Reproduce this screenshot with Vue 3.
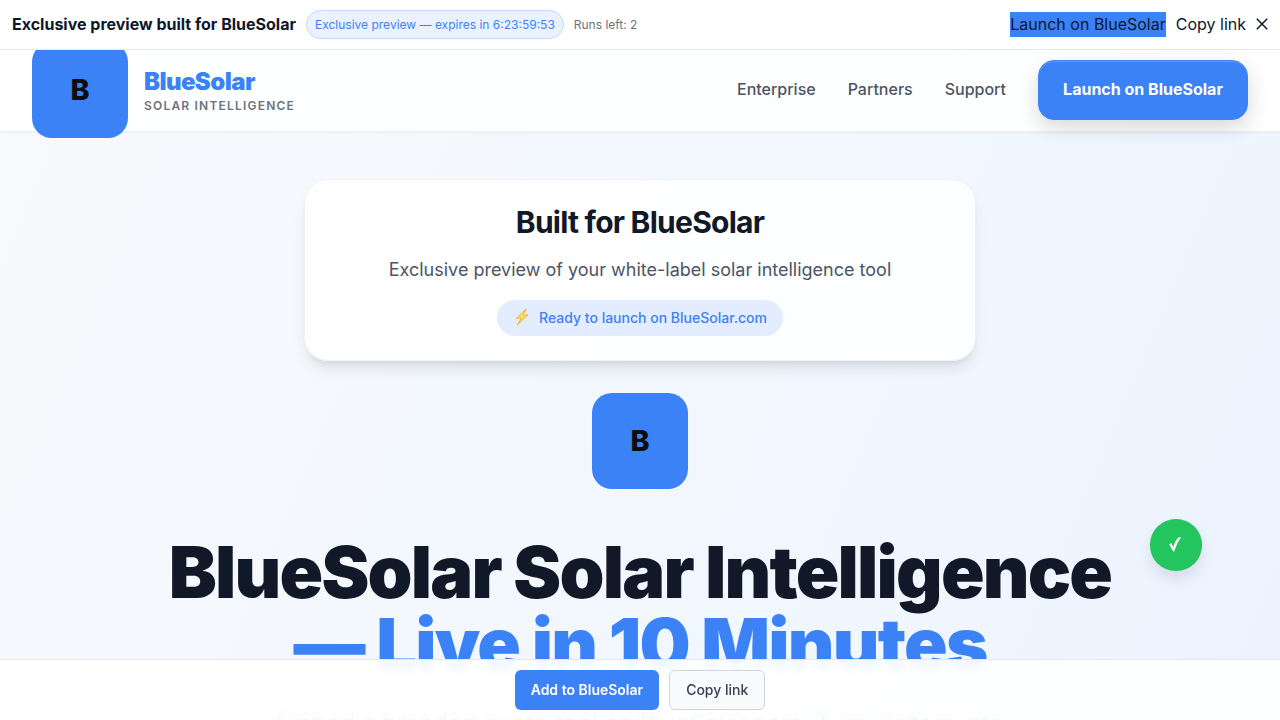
<script setup>
const navLinks = ['Enterprise', 'Partners', 'Support']
</script>

<template>
  <div class="page">
    <div class="preview-bar">
      <div class="preview-left">
        <span class="preview-title">Exclusive preview built for BlueSolar</span>
        <span class="preview-pill">Exclusive preview — expires in 6:23:59:53</span>
        <span class="preview-runs">Runs left: 2</span>
      </div>
      <div class="preview-right">
        <a class="preview-launch">Launch on BlueSolar</a>
        <a class="preview-copy">Copy link</a>
        <span class="close" aria-label="Close">
          <svg width="12" height="12" viewBox="0 0 12 12"><path d="M0.8 0.8 11.2 11.2M11.2 0.8 0.8 11.2" /></svg>
        </span>
      </div>
    </div>

    <header class="header">
      <div class="brand">
        <div class="logo">B</div>
        <div class="brand-text">
          <div class="brand-name">BlueSolar</div>
          <div class="brand-sub">Solar Intelligence</div>
        </div>
      </div>
      <nav class="nav">
        <a v-for="link in navLinks" :key="link" class="nav-link">{{ link }}</a>
        <button class="cta">Launch on BlueSolar</button>
      </nav>
    </header>

    <main class="main">
      <section class="card">
        <h2>Built for BlueSolar</h2>
        <p>Exclusive preview of your white-label solar intelligence tool</p>
        <div class="ready">
          <svg class="bolt" width="16" height="18" viewBox="0 0 16 18">
            <path d="M12.2 1 2.3 10.4 7.4 9.9 3.2 16.9 14 6.9 8.9 7.3Z" />
          </svg>
          <span>Ready to launch on BlueSolar.com</span>
        </div>
      </section>

      <div class="logo hero-logo">B</div>

      <h1 class="headline">BlueSolar Solar Intelligence <span>— Live in 10 Minutes</span></h1>
      <p class="lead">Embed a branded quote tool on BlueSolar.com. Turn visitors into</p>
    </main>

    <div class="check">
      <svg width="13" height="15" viewBox="0 0 13 15"><path d="M0.2 7.5 2.3 6.1 4.4 10.1C5.6 5.8 7.2 1.9 9.6 0.6L12.4 0.2C10 2.6 8.6 5.8 6.9 10L5.1 14.4 4.3 14.4Z" /></svg>
    </div>

    <div class="bottom-bar">
      <button class="add">Add to BlueSolar</button>
      <button class="copy">Copy link</button>
    </div>
  </div>
</template>

<style>
html,
body {
  overflow: hidden;
}
</style>

<style scoped>
* {
  box-sizing: border-box;
}
.page {
  height: 720px;
  overflow: hidden;
  position: relative;
  font-family: Inter, "Liberation Sans", sans-serif;
  font-size: 16px;
  line-height: 24px;
  color: #0f172a;
  background: linear-gradient(to bottom right, #f8fafc, #eff6ff 50%, #e0e7ff) 0 0 / 100% 3000px no-repeat;
}
.preview-bar {
  height: 50px;
  padding: 0 12px;
  display: flex;
  align-items: center;
  justify-content: space-between;
  background: #fff;
  border-bottom: 1px solid #e5e7eb;
  position: relative;
  z-index: 3;
}
.preview-left,
.preview-right {
  display: flex;
  align-items: center;
  gap: 10px;
}
.preview-title {
  font-weight: 700;
  padding-bottom: 1px;
}
.preview-pill {
  font-size: 12px;
  line-height: 19px;
  padding: 4px 8px;
  border: 1px solid #bfdbfe;
  border-radius: 999px;
  background: #eaf2ff;
  color: #3b82f6;
}
.preview-runs {
  font-size: 12px;
  color: #6b7280;
}
.preview-launch,
.preview-copy {
  padding-bottom: 1px;
}
.preview-launch {
  background: #3b82f6;
}
.close {
  display: flex;
  padding-bottom: 1px;
}
.close path {
  fill: none;
  stroke: #0f172a;
  stroke-width: 1.5;
}
.header {
  height: 82px;
  padding: 0 32px 1px;
  display: flex;
  align-items: center;
  justify-content: space-between;
  background: rgba(255, 255, 255, 0.9);
  border-bottom: 1px solid #eceff3;
  box-shadow: 0 1px 2px rgba(0, 0, 0, 0.04);
  position: relative;
  z-index: 2;
}
.brand {
  display: flex;
  align-items: center;
  gap: 16px;
}
.logo {
  width: 96px;
  height: 96px;
  border-radius: 20px;
  background: #3b82f6;
  color: #0d0d0d;
  font-size: 28.8px;
  font-weight: 800;
  display: flex;
  align-items: center;
  justify-content: center;
}
.brand-name {
  font-size: 24px;
  line-height: 32px;
  font-weight: 900;
  letter-spacing: -0.025em;
  color: #3b82f6;
}
.brand-sub {
  font-size: 12px;
  line-height: 16px;
  font-weight: 600;
  letter-spacing: 0.1em;
  text-transform: uppercase;
  color: #6b7280;
}
.nav {
  display: flex;
  align-items: center;
  gap: 32px;
}
.nav-link {
  font-weight: 500;
  color: #4b5563;
  padding-bottom: 2px;
}
button {
  font-family: inherit;
  margin: 0;
}
.cta {
  width: 210px;
  height: 60px;
  padding: 0 0 2px;
  border: 1px solid #3b82f6;
  border-radius: 16px;
  background: #3b82f6;
  color: #fff;
  font-size: 16px;
  font-weight: 700;
  box-shadow: 0 8px 20px rgba(0, 0, 0, 0.15), inset 0 1px 0 rgba(255, 255, 255, 0.2);
}
.main {
  padding-top: 47px;
  display: flex;
  flex-direction: column;
  align-items: center;
}
.card {
  width: 672px;
  height: 182px;
  padding: 24px;
  display: flex;
  flex-direction: column;
  align-items: center;
  background: rgba(255, 255, 255, 0.85);
  border: 1px solid rgba(229, 231, 235, 0.5);
  border-radius: 24px;
  box-shadow: 0 10px 15px -3px rgba(0, 0, 0, 0.1), 0 4px 6px -4px rgba(0, 0, 0, 0.1);
}
.card h2 {
  margin: 0 0 16px;
  font-size: 30px;
  line-height: 36px;
  font-weight: 700;
  letter-spacing: -0.025em;
  color: #111827;
}
.card p {
  margin: 0 0 16px;
  font-size: 18px;
  line-height: 28px;
  color: #4b5563;
}
.ready {
  height: 36px;
  padding: 0 16px;
  display: flex;
  align-items: center;
  border-radius: 18px;
  background: #e4edff;
  color: #3b82f6;
  font-size: 14px;
  line-height: 20px;
  font-weight: 500;
}
.bolt {
  margin: -2px 9px 0 1px;
}
.bolt path {
  fill: #ffe36b;
  stroke: #f5a623;
  stroke-width: 0.9;
  stroke-linejoin: round;
}
.hero-logo {
  margin-top: 32px;
}
.headline {
  width: 1000px;
  margin: 47px 0 0;
  text-align: center;
  font-size: 72px;
  line-height: 72px;
  font-weight: 900;
  letter-spacing: -0.025em;
  color: #111827;
}
.headline span {
  display: block;
  color: #3b82f6;
}
.lead {
  margin: 23px 0 0;
  text-align: center;
  white-space: nowrap;
  font-size: 24px;
  line-height: 39px;
  color: #4b5563;
}
.check {
  position: absolute;
  left: 1150.3px;
  top: 519.3px;
  width: 51.4px;
  height: 51.4px;
  border-radius: 50%;
  background: #22c55e;
  display: flex;
  align-items: center;
  justify-content: center;
  padding-bottom: 1px;
  box-shadow: 0 8px 15px rgba(0, 0, 0, 0.1);
}
.check path {
  fill: #fff;
}
.bottom-bar {
  position: absolute;
  left: 0;
  right: 0;
  bottom: 0;
  z-index: 3;
  height: 61px;
  display: flex;
  align-items: center;
  justify-content: center;
  gap: 10px;
  background: rgba(255, 255, 255, 0.94);
  border-top: 1px solid #e5e7eb;
  backdrop-filter: blur(4px);
}
.add,
.copy {
  height: 40px;
  border-radius: 6px;
  font-size: 14px;
  padding: 0 16px 2px;
}
.add {
  border: 0;
  background: #3b82f6;
  color: #fff;
  font-weight: 600;
}
.copy {
  border: 1px solid #d1d5db;
  background: #f9fafb;
  color: #374151;
  font-weight: 500;
}
</style>
